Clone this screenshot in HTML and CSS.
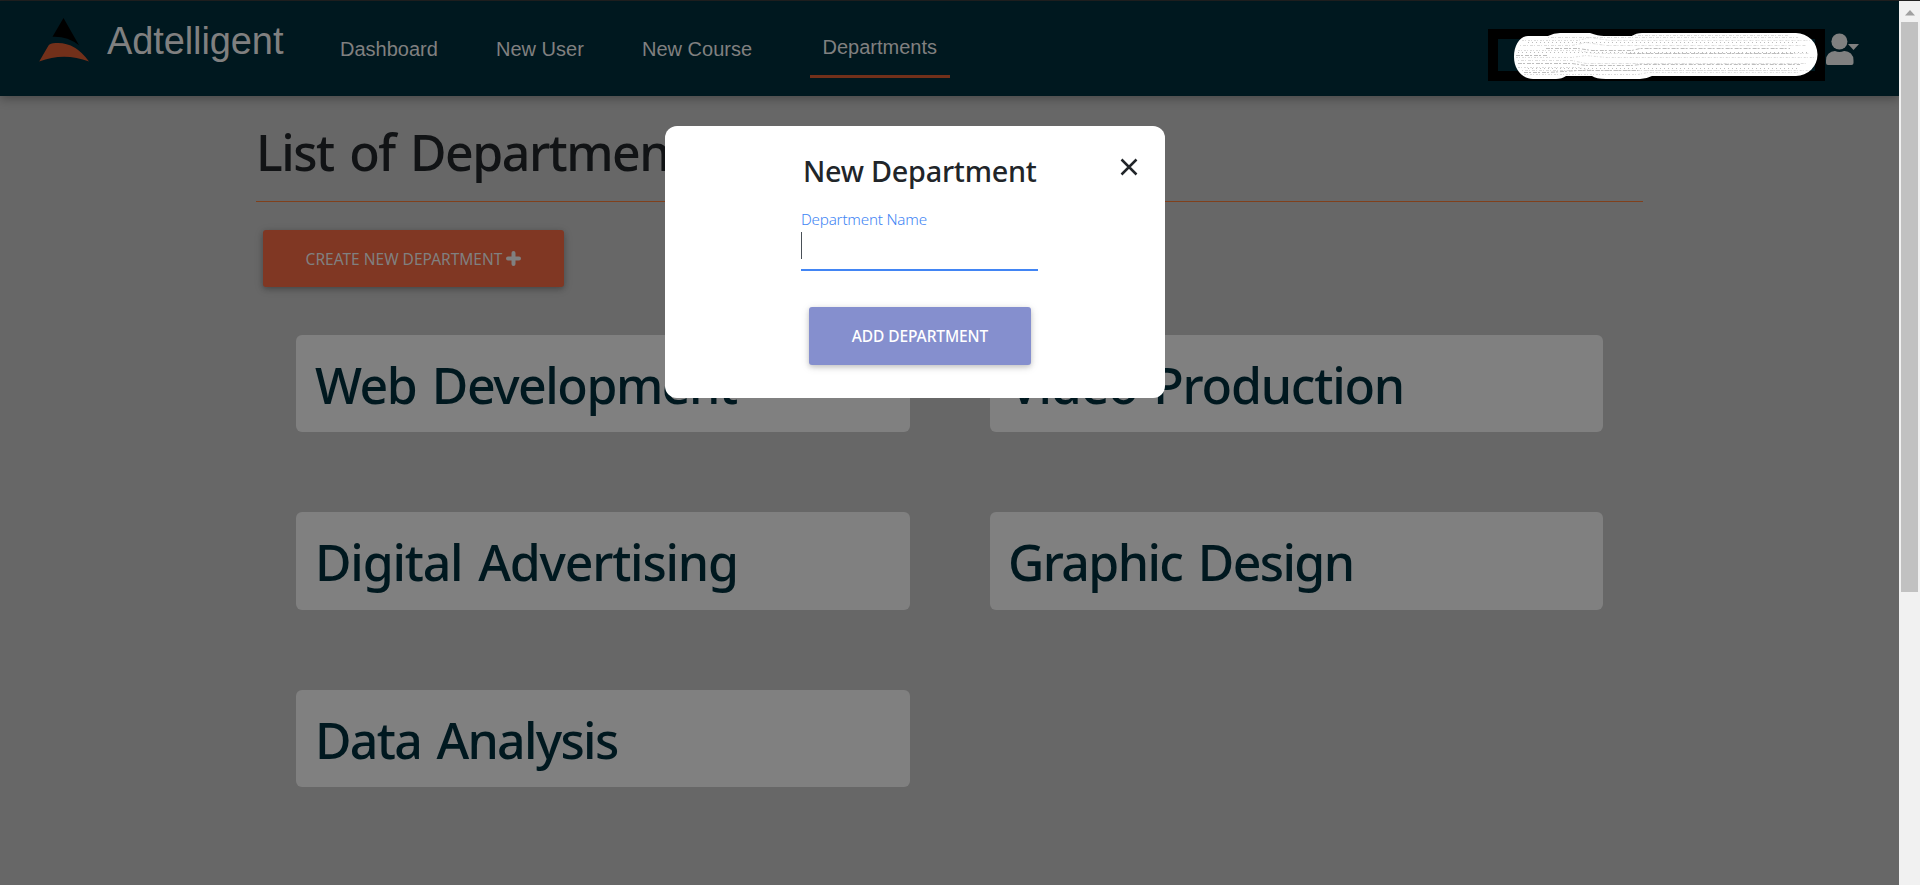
FILE: index.html
```html
<!DOCTYPE html>
<html lang="en">
<head>
<meta charset="utf-8">
<title>Adtelligent - Departments</title>
<link rel="stylesheet" href="styles.css">
</head>
<body>
<div class="app">
  <div class="page">
    <header class="navbar">
      <svg class="logo" width="52" height="46" viewBox="0 0 52 46">
        <path fill="#000" d="M25.500 1 14.500 19.800Q29 19 41 28.200z"/>
        <path fill="#72301a" d="M1.200 44.600 10.500 28.600Q12 26 18 26.100 37 25 51 44.600 26 35 1.200 44.600z"/>
      </svg>
      <span class="brand">Adtelligent</span>
      <nav class="links">
        <a class="link dash">Dashboard</a>
        <a class="link user">New User</a>
        <a class="link course">New Course</a>
        <a class="link active">Departments</a>
      </nav>
      <div class="account">
        <svg width="337" height="52" viewBox="0 0 337 52">
          <defs>
            <clipPath id="blob"><path d="M40 7H60Q66 4 72 4H102Q110 7 116 7H144Q148 4 154 4H308A21.500 21.500 0 0 1 308 47H164Q158 50 152 50H118Q108 50 104 47H78Q74 50 68 50H45C34 50 26 40 26 28S32 7 40 7z"/></clipPath>
          </defs>
          <path fill="#000" d="M0 0h337v52H0z"/>
          <path fill="#00181f" d="M10 10h317v32H10z"/>
          <g clip-path="url(#blob)" fill="none" stroke-width="1">
            <path fill="#fff" d="M20 0h317v52H20z"/>
            <g stroke="#dcdcdc">
              <path stroke-dasharray="2 1 1 2" d="M34 11.500H90l12-3 20 3h200M30 21.500H90l16 3h215M28 28.500H84l14-2 20 2h210M30 38.500H90l14 3h220M36 45.500H150l10-2h150"/>
              <path stroke-dasharray="1 2 3 1" d="M60 8.500H310M32 16.500H84l14-3 20 3h200M30 31.500H84l14 3h220M34 41.500H300M140 6.500H300"/>
            </g>
            <g stroke="#bdbdbd">
              <path stroke-dasharray="4 1 2 2" d="M28 26.500H60M58 19.500H90l14 2h40l8-2h150M30 34.500H84l14 2h46l8-1h160M36 43.500H60l30-2h60M140 24.500H305"/>
              <path stroke-dasharray="1 3" d="M40 13.500H310M30 23.500H320M40 39.500H310"/>
            </g>
          </g>
        </svg>
        <svg class="person" width="35" height="34" viewBox="0 0 35 34" fill="#808080">
          <circle cx="14.400" cy="8.500" r="8"/>
          <path d="M1 27.500a9 9 0 0 1 9-9.500q4.500 1.800 9 0a9 9 0 0 1 9.500 9.500V30q0 2-2 2H3q-2 0-2-2z"/>
          <path d="M23 11h11l-5.500 6z"/>
        </svg>
      </div>
    </header>
    <main class="content">
      <h1 class="heading">List of Departments</h1>
      <button class="btn create">CREATE NEW DEPARTMENT
        <svg width="15" height="15" viewBox="0 0 15 15"><path d="M7.500 2v11M2 7.500h11" stroke="#808080" stroke-width="4" stroke-linecap="round"/></svg>
      </button>
      <section class="grid">
        <article class="card web">Web Development</article>
        <article class="card video">Video Production</article>
        <article class="card digital">Digital Advertising</article>
        <article class="card graphic">Graphic Design</article>
        <article class="card data">Data Analysis</article>
      </section>
    </main>
  </div>
  <aside class="scrollbar">
    <svg width="10" height="6" viewBox="0 0 10 6"><path fill="#a0a0a0" d="M0 5.500 5 0l5 5.500z"/></svg>
    <div class="thumb"></div>
  </aside>
</div>
<div class="modal">
  <svg class="close" width="18" height="18" viewBox="0 0 18 18"><path d="M1.500 1.500l15 15M16.500 1.500l-15 15" stroke="#212529" stroke-width="2.500"/></svg>
  <h2 class="title">New Department</h2>
  <label class="label">Department Name</label>
  <div class="field"><i class="caret"></i></div>
  <button class="btn add">ADD DEPARTMENT</button>
</div>
</body>
</html>
```
FILE: styles.css
```css
* { box-sizing: border-box; }
body { margin: 0; overflow: hidden; background: #676767; font-family: "Noto Sans", sans-serif; }
.app { display: flex; height: 885px; border-top: 1px solid #222; }
.page { flex: 1; }
.navbar { display: flex; align-items: flex-start; height: 95px; padding-left: 38px; background: #00181f; box-shadow: 0 2px 10px rgba(0,0,0,.35); font-family: "Liberation Sans", sans-serif; color: #808080; }
.logo { margin-top: 16px; }
.brand { width: 176px; margin: 17px 0 0 17px; font-size: 38px; line-height: 46px; letter-spacing: -.1px; white-space: nowrap; }
.links { display: flex; margin-left: 57px; font-size: 20px; line-height: 24px; white-space: nowrap; }
.link { padding-top: 36px; width: 156px; }
.link.user { width: 146px; }
.link.course { width: 168px; }
.link.active { width: 140px; height: 77px; padding: 34px 0 0 12.500px; border-bottom: 3px solid #72301a; }
.account { display: flex; margin: 28px 39px 0 auto; }
.person { margin: 4px 0 0; }
.content { padding: 23px 256px 0; }
.heading { margin: 0; height: 83px; border-bottom: 1px solid #80401c; font-size: 50px; font-weight: 500; line-height: 66px; letter-spacing: -1.500px; word-spacing: 4px; color: #111315; white-space: nowrap; }
.btn { display: flex; align-items: center; justify-content: center; border: 0; border-radius: 3px; font-family: "Noto Sans", sans-serif; font-size: 15.500px; white-space: nowrap; }
.create { width: 301px; height: 57px; margin: 28px 0 0 7px; gap: 4px; color: #808080; background: #803723; box-shadow: 0 2px 5px rgba(0,0,0,.2), 0 2px 10px rgba(0,0,0,.15); }
.grid { display: grid; grid-template-columns: 614px 613px; column-gap: 80px; row-gap: 80px; padding: 48px 0 0 40px; }
.card { height: 97.300px; padding: 14px 0 0 19px; border-radius: 6px; background: #808080; color: #00181f; font-size: 50px; font-weight: 500; line-height: 72px; word-spacing: 4px; white-space: nowrap; }
.web { letter-spacing: -1.470px; }
.video { letter-spacing: -1.200px; }
.digital { letter-spacing: -1.200px; }
.graphic { letter-spacing: -1.600px; padding-left: 18px; }
.data { letter-spacing: -1.700px; }
.scrollbar { width: 21px; background: #f1f1f1; display: flex; flex-direction: column; align-items: center; padding-top: 9px; }
.thumb { width: 17px; height: 570px; margin-top: 6px; background: #c1c1c1; }
.modal { position: absolute; left: 665px; top: 126px; width: 500px; height: 272px; padding: 25px 127px 0 136px; border-radius: 12px; background: #fff; }
.close { position: absolute; top: 32px; right: 27px; }
.title { margin: 0; padding-left: 2px; font-size: 28.800px; font-weight: 500; line-height: 40px; letter-spacing: -.250px; color: #212529; white-space: nowrap; }
.label { display: block; margin-top: 16px; font-size: 15.200px; font-weight: 300; line-height: 25px; letter-spacing: -.200px; color: #4285f4; white-space: nowrap; }
.field { height: 39px; border-bottom: 2px solid #4285f4; }
.caret { display: block; width: 1px; height: 27px; background: #495057; }
.add { width: 222px; height: 58px; margin: 36px 0 0 8px; background: #858fce; color: #fff; font-weight: 500; letter-spacing: -.1px; box-shadow: 0 2px 5px rgba(0,0,0,.16), 0 2px 10px rgba(0,0,0,.12); }
```
